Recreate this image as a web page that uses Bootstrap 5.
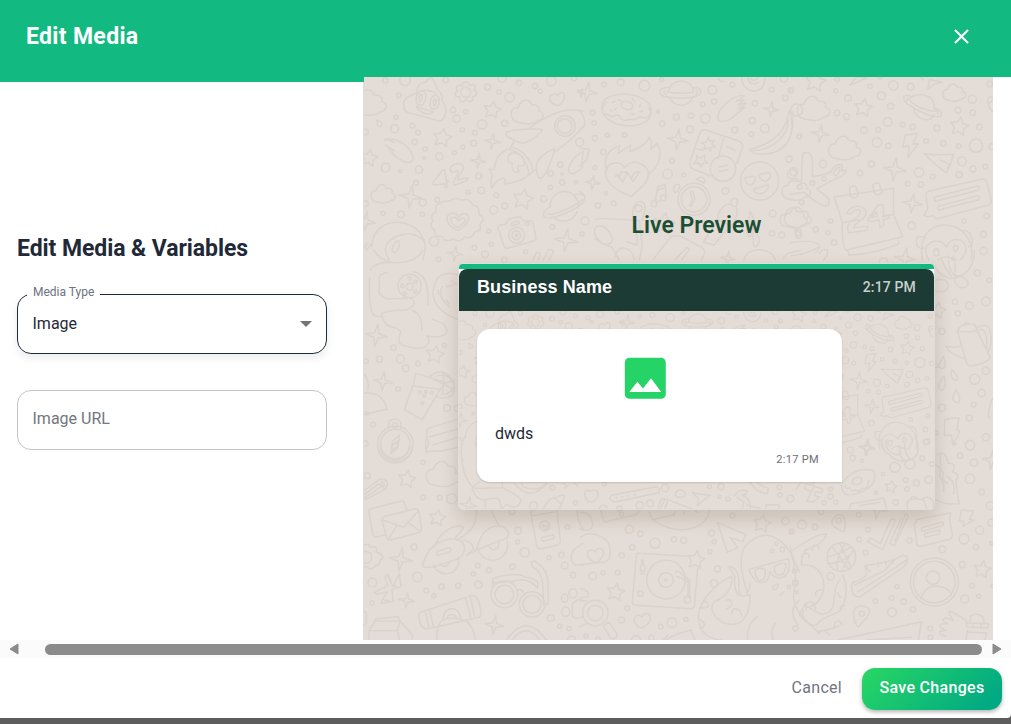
<!DOCTYPE html>
<html lang="en">
<head>
<meta charset="utf-8">
<meta name="viewport" content="width=device-width, initial-scale=1">
<title>Edit Media</title>
<link href="https://cdn.jsdelivr.net/npm/bootstrap@5.3.0/dist/css/bootstrap.min.css" rel="stylesheet">
<style>
body{font-family:Roboto,"Liberation Sans",sans-serif;background:#5d5d5d;color:#1f2937;height:724px;overflow:hidden}
.dialog{height:718px;background:#fff;border-radius:0 0 4px 0;overflow:hidden}
.dialog-head{height:77px;background:#12b981;padding:0 37px 4px 26px;color:#fff}
.dialog-head h1{font-size:23px;font-weight:700;line-height:28px;letter-spacing:.33px}
.panes{height:563px}
.form-pane{width:364px;border-top:5px solid #12b981;padding:0 37px 37px 17px}
.form-pane:after{content:"";position:absolute;right:0;top:0;bottom:0;width:1px;background:#dcdcdc}
.form-pane h2{font-size:23px;font-weight:700;line-height:28px;letter-spacing:-.07px;margin-bottom:31px;white-space:nowrap}
.field{height:60px;border:1px solid #c3c5c8;border-radius:14px;padding:0 14.5px;font-size:16px}
.field.active{border-color:#1f2937;box-shadow:0 4px 9px rgba(0,0,0,.08);margin-bottom:36px}
.float-label{left:9px;top:-12px;padding:0 6px;background:#fff;font-size:12px;line-height:18px;color:#6b7280}
.hint{color:#717780;padding-bottom:3px}
.wall-pane{width:629px;background:#e4dcd6}
.wall{left:0;top:0;fill:none;stroke:#dad2cb;stroke-width:4.4;stroke-linecap:round;stroke-linejoin:round}
.live-title{font-size:23px;font-weight:600;line-height:28px;color:#1c4e34;margin:135px 0 23px 36px}
.phone{width:477px;height:247px;border:1px solid #dcdddd;border-radius:5px;background:#e4dcd6;box-shadow:0 8px 18px rgba(75,60,35,.18);margin-left:36px}
.phone-in{border-radius:4px;overflow:hidden;height:245px}
.phone-line{height:5px;background:#12b981}
.phone-head-wrap{background:#fff}
.phone-head{height:42px;background:#1d3b35;color:#fff;border-radius:8px 8px 0 0;padding:0 18px 6px}
.biz{font:700 18px/22px "Liberation Sans",sans-serif;letter-spacing:.08px}
.clock{font-size:14px;font-weight:500;color:#c7d0ce;letter-spacing:.15px}
.bubble{width:365px;height:153px;margin:18px;background:#fff;border-radius:13px 13px 0 13px;padding:21.5px 23px 0 18px;box-shadow:0 1px 2px rgba(0,0,0,.15)}
.bubble svg{display:block;margin:0 auto;transform:translateX(-12px)}
.msg{font-size:16px;line-height:24px;margin-top:17px}
.stamp{font-size:11px;line-height:16px;margin-top:6px;color:#6b6f74;letter-spacing:.33px}
.scroller{height:18px;background:#fbfbfb;padding:0 9px}
.thumb{height:11px;border-radius:6px;background:#8b8b8b;margin:0 10px 0 26px}
.actions{height:60px;padding:2px 9px 0 0}
.cancel{font-size:16px;color:#717583;margin:0 20px 2px 0;line-height:20px;letter-spacing:.28px}
.save{width:140px;height:42px;border:0;border-radius:13px;color:#fff;font-size:16px;font-weight:500;letter-spacing:.3px;background:linear-gradient(135deg,#25d366 8%,#00a884 92%);box-shadow:0 2px 4px rgba(0,0,0,.3);padding:0 0 2px;white-space:nowrap}
</style>
</head>
<body>
<main class="dialog d-flex flex-column">
  <header class="dialog-head d-flex align-items-center justify-content-between flex-shrink-0">
    <h1 class="m-0">Edit Media</h1>
    <svg width="25" height="25" viewBox="0 0 24 24" fill="#fff" aria-label="Close"><path d="M19 6.41 17.59 5 12 10.59 6.41 5 5 6.41 10.59 12 5 17.59 6.41 19 12 13.41 17.59 19 19 17.59 13.41 12z"/></svg>
  </header>
  <section class="panes d-flex flex-shrink-0">
    <div class="form-pane position-relative d-flex flex-column justify-content-center flex-shrink-0">
      <h2>Edit Media &amp; Variables</h2>
      <div class="field active position-relative d-flex align-items-center justify-content-between">
        <span class="float-label position-absolute">Media Type</span>
        <span>Image</span>
        <svg width="12" height="6" viewBox="0 0 12 6"><path d="M0 0h12L6 6z" fill="#757575"/></svg>
      </div>
      <div class="field d-flex align-items-center hint"><span>Image URL</span></div>
    </div>
    <div class="wall-pane position-relative overflow-hidden flex-shrink-0">
      <svg class="wall position-absolute" width="629" height="563"><g id="doodles"></g><g id="doodlesLow"></g></svg>
      <div class="position-relative d-flex flex-column align-items-center">
        <h2 class="live-title">Live Preview</h2>
      </div>
      <div class="position-relative d-flex justify-content-center">
        <div class="phone">
          <div class="phone-in d-flex flex-column">
            <div class="phone-line"></div>
            <div class="phone-head-wrap"><div class="phone-head d-flex align-items-center justify-content-between"><span class="biz">Business Name</span><span class="clock">2:17 PM</span></div></div>
            <div class="position-relative flex-grow-1 overflow-hidden">
              <svg class="wall position-absolute" width="475" height="199"><use href="#doodles" transform="scale(.753)"/><g id="doodlesInner"></g></svg>
              <div class="bubble position-relative">
                <svg width="54.6" height="54.6" viewBox="0 0 24 24"><rect x="3" y="3" width="18" height="18" rx="2" fill="#25d366"/><path d="M8.5 13.5l2.5 3.01L14.5 12l4.5 6H5z" fill="#fff"/></svg>
                <div class="msg">dwds</div>
                <div class="stamp text-end">2:17 PM</div>
              </div>
            </div>
          </div>
        </div>
      </div>
    </div>
  </section>
  <div class="scroller d-flex align-items-center flex-shrink-0">
    <svg width="10" height="12" viewBox="0 0 10 12"><path d="M9 1v10L1 6z" fill="#8b8b8b" stroke="#8b8b8b" stroke-linejoin="round"/></svg>
    <div class="thumb flex-grow-1"></div>
    <svg width="10" height="12" viewBox="0 0 10 12"><path d="M1 1v10l8-5z" fill="#8b8b8b" stroke="#8b8b8b" stroke-linejoin="round"/></svg>
  </div>
  <footer class="actions d-flex align-items-center justify-content-end flex-shrink-0">
    <span class="cancel">Cancel</span>
    <button class="save" type="button">Save Changes</button>
  </footer>
</main>
<script src="https://cdn.jsdelivr.net/npm/bootstrap@5.3.0/dist/js/bootstrap.bundle.min.js"></script>
<script>
// Wallpaper tiles: x/y is the tile's origin in wall pixels; artwork is drawn at three units per pixel.
// dots: x,y,r   stars/sparks/clouds: x,y,radius
const upper=[
{x:-1,y:-7,
 dots:'67,31,8 126,31,16 248,30,8 374,51,9 417,25,12 468,39,8 516,48,8 532,64,6 565,33,14 408,66,7 440,82,14 107,76,7 270,120,8 308,125,6 281,146,11 99,142,6 95,176,12 148,167,7 165,188,7 357,163,14 425,160,9 298,179,6 336,188,7 155,216,8 186,237,7 184,264,4 332,220,9 300,231,6 229,259,11 274,248,6 68,293,13 112,304,5 168,299,11 159,338,7 347,318,9 355,361,10 316,367,6 400,376,7 179,398,10 223,389,7 114,433,10 60,430,6 178,433,6 8,401,8 392,420,12 425,408,9 377,484,6 385,523,6 334,533,7 213,514,14 488,545,6 366,553,10 227,568,7 592,284,8 563,310,8 597,312,4 598,337,8 639,337,5 562,352,6 542,386,9 568,471,7 8,186,8 650,217,12 424,570,8 633,25,8',
 stars:'388,120,27 238,204,29 480,388,32 18,264,27',
 sparks:'388,214,24 346,273,22 143,380,35 609,511,35 276,551,23 8,455,30 655,69,12',
 clouds:'492,128,47 60,373,36 18,100,50',
 paths:['M125 112c-12-20 8-35 38-43 -5-20 10-33 25-33 12-12 16-14 18-14 8 15 16 21 15 35 15 11 20 25 15 34 20 20 13 62-9 62l-90-25c-14-5-18-12-12-16zM160 110c12 22 48 28 50 15z M163 72c12-20 55-9 58 4',
 'M160 84a14 19 15 1 0 28 0a14 19 15 1 0-28 0 M202 97a13 18 15 1 0 26 0a13 18 15 1 0-26 0 M169 84a4 9 10 1 0 8 0a4 9 10 1 0-8 0 M211 97a4 9 10 1 0 8 0a4 9 10 1 0-8 0',
 'M299 39q9-6 18 0l3 8 9-4q9 3 8 12l-4 6 8 5q2 9-5 13l-8 1 2 9q-7 8-15 5l-6-6-7 7q-11 1-12-6v-9l-9 1q-7-7-3-15l7-4-6-7q2-10 11-10l8 3zM293 67a15 15 0 1 0 30 0a15 15 0 1 0-30 0',
 'M560 83c4-13 18-15 24-6 9-16 24-10 20 5-2 10-10 20-18 25-14-3-28-10-26-24z',
 'M65 212c15-18 85 10 85 58-14 20-50-2-75-38M67 225l28 18M75 232l18 10M65 206l30 12M77 240',
 'M240 299l-33 42 6 4 30-3 4 10 6-1-4-12 8-4-7-5-6-31zM264 305c-14-20 30-34 37-16 4 14-18 27-17 40 12 0 24-9 32-4 0 8-20 13-42 20-9-4 8-26 12-40-7-7-12 7-22 0z',
 'M428 189c10-12 105-14 110-10-2 10-42 42-60 40-15-2-54-20-50-30zM500 174c60-46 115-62 160-50M577 245c30-22 60-45 83-75M575 236c-30 12-62 36-54 64 2 16 4 27 14 24 15-8 34-60 40-88zM455 213l-15 24 M428 238c40 0 66 35 70 76l23-17M448 232c35 10 58 40 62 72M430 240c-20 12-32 20-36 58-8 0-14 2-16-2 5 13 12 17 10 22-6 10-4 24-2 36 12-20 20-27 37-30 8 10 4 14 0 18 32-4 58-10 72-26 M440 252c-12 17-2 28 8 28-4 22 6 30 20 25-4-8-8-18 4-18 14 3 16-10 8-24-10-10-25-20-40-11z',
 'M575 168a31 31 0 1 0 62 0a31 31 0 1 0-62 0M583 168a22 22 0 1 0 44 0a22 22 0 1 0-44 0',
 'M655 247c-18 8-42 40-38 58 10 14 30 2 43-18',
 'M233 400c14-15 22 0 32-10 20-12 24 2 35 0 20-6 23 8 31 16 18 2 18 15 16 26 19 10 15 21 3 30 9 16-4 23-16 24-2 15-15 20-30 15-8 14-22 14-34 5-14 10-29 4-33-6-20 0-24-8-22-20-16-8-11-20-5-26-9-14-2-26 9-28-3-16 1-26 14-26z',
 'M252 448c0-22 28-24 34-6 8-14 31-16 31 3 0 14-18 30-32 36-22-9-32-18-33-33zM263 448c0-10 18-8 24 5 6-13 20-10 20-3 0 8-13 17-22 23-14-7-20-14-22-25z',
 'M405 475q-1-7 6-9l18-4 7-15 35-7 14 14 18-2q6 1 7 7l9 44q0 8-8 10l-76 21q-9 2-12-5zM437 496a24 24 0 1 0 48 0a24 24 0 1 0-48 0M447 496a13 13 0 1 0 26 0a13 13 0 1 0-26 0M457 496a4 4 0 1 0 8 0a4 4 0 1 0-8 0M444 460l22-7q6 4 0 9l-20 5q-5-2-2-7zM488 462a5 5 0 1 0 10 0a5 5 0 1 0-10 0',
 'M562 410a42 42 0 1 1 83 5M642 425a42 42 0 0 1-70 15M562 410c-25 13-26 30-12 34 25 4 87-25 110-45M554 432c24 4 80-23 106-44M660 375c-8-4-16-4-24-1',
 'M27 530c0-100 150-95 160 0 0 12-3 25-8 40M68 535c4-40 90-65 118-17M67 535q0 18 12 35M87 540q6-29 20-28 7 9-7 34-12 4-13-6zM12 520l-8 15M10 540l14-17',
 'M510 570l10-22q8-2 12 4l-7 18M540 570l17-31q12-2 14 6l-12 25','M42 150q14 2 15 15-8 10-14 2z']},
{x:216,y:-7,
 dots:'72,43,7 122,37,10 193,47,16 245,29,6 397,60,13 457,44,7 368,103,7 402,94,8 289,141,9 333,137,8 376,145,14 247,161,8 234,125,4 38,128,7 42,159,7 45,205,8 82,196,6 134,195,7 70,246,8 45,293,6 525,100,8 575,59,7 616,84,8 517,152,9 554,175,13 514,192,7 464,180,9 330,178,10 276,272,7 263,312,14 311,315,6 78,370,5 54,406,8 101,400,7 436,363,10 627,267,9 636,312,14 578,431,10 605,495,9 576,490,8 632,61,8 657,200,6 654,487,10 6,492,6 612,25,11 15,453,12 650,120,18',
 stars:'252,462,34',
 sparks:'22,66,30 293,209,32 574,118,23 38,338,22 444,565,22',
 clouds:'640,445,40 648,360,42',
 paths:['M66 110c0-55 148-50 148 15 0 62-152 55-148-15zM80 95c-15 15-17 34-4 37 8 0 11 8 22 8 10-6 13-7 18-4 10 12 12 18 26 14 8-8 12 5 25-3 12-12 18-4 25-3 19-2 24-14 15-30M124 103c2-17 36-8 34 8-4 15-38 6-34-8zM97 98l8-4M105 119l4-6M115 89l9 3M157 87l8 8M150 130l12 4M181 103l-2 9M180 125l10-3M91 119l3 4',
 'M267 66c0-43 70-45 73 0M268 83c16 31 56 30 70 0M266 52c-38 2-30 26-5 29 33 5 68 4 91-3 22-14 8-26-13-25M262 66c30 5 55 5 79 0M254 62q-6 8 4 10M350 61q7 7-2 11',
 'M413 140c2-27 52-70 80-62l-25 16 25-5-18 15 23-5-24 18 20-5-25 21c-25 26-58 28-56 7z',
 'M485 25c5 52 72 50 69 0M503 25q7 25 33 12M512 25q10 13 20 0M414 25q5 13 19 9',
 'M508 238c45-8 106-40 116-100l5-18 8 4-3 20c9 55-16 105-78 108-28 3-45-5-48-14zM515 242c65 0 110-47 110-92',
 'M330 275l30-87q5-12 18-8l98 33q14 6 12 18l-17 48M392 318l-53-21q-12-7-9-22M431 205l-17 61M351 238l16 2M440 230l25 10M385 202l5 11 13-2-8 11 12 8-14 2-1 12-9-10-12 5 5-13-11-7 13-3zM350 256l11 9 14-10-2 15 11 9-16 1-6 10-7-12-15 4 10-13zM391 296a38 38 0 1 0 76 0a38 38 0 1 0-76 0M415 291l26-5M418 304l26-5',
 'M81 300c-13-32 0-58 38-74l-5 25 38-26-3 20c26-10 54-26 58-44 10 12 9 24 5 37l19-17c12 20 19 64-28 92M76 312c0-36 44-44 58-19 28-35 72-5 72 20-4 32-38 51-52 66-35-13-73-32-78-67zM105 320l9-5 14 22 14-30 17 27 20-30-16 4-9 18-14-20-17 1-6 17-5-10z',
 'M482 333a57 57 0 1 0 114 0a57 57 0 1 0-114 0M496 332q-4-15 14-10 13-9 16 4-1 12-12 21-17-6-18-15zM538 320q0-13 15-8 13-12 19 2 0 12-16 21-14-5-18-15zM520 356q28-5 44-12c6 25-36 40-44 12z',
 'M294 388a48 48 0 1 0 96 0a48 48 0 1 0-96 0M304 388a38 38 0 1 0 76 0a38 38 0 1 0-76 0M330 367l8-3 7 26-11 19-5-3 8-17zM300 347q-6-8-17 0-4 11 2 20 11 0 15-20zM349 327q12-10 24 0 3 8-1 13z',
 'M241 391l-15 6 7-46 22-8 4 40M230 404a8 10 0 1 0-2 4M257 386a8 9 0 1 0-2 4M233 360l21-8',
 'M159 450c-9-65 38-68 36-35 0 10-7 22-8 35M166 415a10 10 0 1 0 20 0a10 10 0 1 0-20 0M48 448q10-6 130 4l9 75-9 43M43 485c0-35 52-13 54 25-11 30-49 3-54-25zM105 560c7-40 50-32 58 8M45 505q14 18 50 26l22 38M170 470l2 55-32-9',
 'M454 390q8-9 19 0l-3 17q-6 6-17-3zM450 402q-35 5-38 49l-42 66 33 8 33-43q20-10 27-30 13-20 5-42M410 447l34 18',
 'M220 568l52-67q14-8 35 0l59 32q11 8 7 18l-8 19M287 568l32-35q11 0 7 8l-20 28',
 'M492 570c5-40 83-42 94 0M610 565q5-18 50-23M510 425q15 30 21 32-10 3-17-5 0 55-5 50-15-15-7-30zM518 475q20 20 20 42-14 25-18 4zM600 25M0 125q18 20 13 42L0 180M0 365q30 15 0 40M0 235l28 3-8 30-20 20M10 244l-5 40']},
{x:427,y:-77,
 dots:'138,238,7 134,272,6 237,259,6 307,256,14 359,260,10 171,294,10 271,287,12 138,339,8 167,350,9 299,319,9 290,366,13 335,374,7 365,381,8 438,384,9 501,331,9 545,338,8 544,298,12 565,381,8 596,252,8 219,391,10 262,389,7 25,409,7 258,427,14 292,438,8 405,423,7 457,430,8 503,438,7 555,437,20 513,484,13 583,500,7 546,507,9 504,524,9 384,517,14 350,551,7 390,554,8 425,530,7 96,492,11 241,492,9 207,519,8 99,537,6 64,549,7 26,561,7 32,607,7 119,663,7 111,698,6 74,688,8 129,728,8 362,677,11 519,663,7 587,648,8 577,703,9 578,753,11 278,785,12 8,515,12 267,225,11 603,440,9 2,270,6',
 stars:'73,245,32 217,324,28 505,380,29',
 sparks:'88,401,27 311,508,35 364,610,30 342,775,32',
 clouds:'67,327,48 489,279,34 160,446,47 20,653,40',
 paths:['M176 256l22-26 30 4zM410 267l6-28 38 8q-18-1-44 20zM390 225q-2 12 7 14',
 'M358 295c18-20 75-16 72 32M368 323c0 35 56 50 60 20M360 290c-29-15-28 15-3 26 32 24 74 38 92 33 11-16-16-25-21-24M350 294c17 22 47 38 90 40M351 295q-8 5-4 12M434 330q9 5 5 13',
 'M343 406l36-6-13 32 16-1-31 41 4-34-19 2zM400 462q45 4 87 1-5 28-21 56-33-23-66-57zM448 480l28 13-7 12',
 'M36 460q25-10 28 20v50q30-3 56-14 10-27 33-22 4 12-2 20l14-4q3 15-30 25l-58 31 36 29q5 20-7 24-30-6-66-42l-40 6M0 543l32-1q-2-40 4-82M128 520q7-20 19-18-1 18-11 26-8 0-8-8z',
 'M129 591l179-26q-2 37 0 78l27 67-168 40q-14-3-13-82-10-35-25-77zM169 750l5 16q80-5 149-34v-9M154 668l53-9M275 650l33-7M175 565q10-12 20-4l7 24q-8 14-24 4zM245 555q12-10 20-4l8 26q-9 12-23 4z',
 'M168 641c6-28 56-30 57-2 0 23-34 26-38 45q30-7 44-4 3 9-12 12l-46 6q-12-30 25-45 15-18 7-22-12-9-26 12zM262 614l-32 46q3 9 34 0l4 22q14 0 9-23l18-5-2-9-16 2v-32zM256 635l-14 17 17-3z',
 'M411 574l165-37q8 0 11 8l14 57q-2 12-10 13l-150 41q-10 0-15-9-12 6-27-1 8-12 11-20l-5-36q-1-13 6-16zM431 591l129-33q8 3 3 12l-128 34q-8-5-4-13zM441 619l119-32q9 4 2 12l-118 31q-8-4-3-11z',
 'M395 780c-30-150 170-130 145 0M399 744q-27 7-22-31 10-6 28 1M514 692q26-5 30 35 1 15-12 12M414 780q-25-40 13-56 26-5 40 18 10-30 42-22 34 25-2 60M428 757a8 11 0 1 0 16 0a8 11 0 1 0-16 0M487 745a7 9 0 1 0 14 0a7 9 0 1 0-14 0M432 750q5-5 8 0M442 780q20-18 54 0M470 768l15 12',
 'M18 690q18 14 12 23-10 5-16-4zM0 728q80-14 87 14l-12 16M0 767q50-5 87-27M85 762q8-19 24-12 4 15-12 30M590 310q-2-24 15-18M606 300l-14 10q4 20 14 25M0 340q12 30 0 60']}];
const lower=[
{x:-1,y:173,
 dots:'91,293,8 112,327,12 128,355,10 165,341,7 50,328,9 9,333,7 244,286,6 105,417,7 252,474,10 283,475,9 30,524,7 7,580,8 12,490,5',
 stars:'216,314,28',
 sparks:'40,256,34 60,394,29',
 clouds:'',
 paths:['M32 0q25 40 72 38 60-2 75-38M20 60q20-25 60-22M20 85q-4 50 5 100 10 20 35 12M150 65q50 4 45 100M75 68q-35 0-25 40-10 25 20 38 65 0 72-3 28 20-12 37-50 0-74 10 4 40 42 43l15 10c-10 40-10 40 35 50 50 10 60-25 43-35 50 8 75-8 52-35-12-8-25-12-35-15M145 180q34 10 31 60',
 'M105 108a35 35 0 1 0 70 0a35 35 0 1 0-70 0M130 110a10 10 0 1 0 20 0a10 10 0 1 0-20 0M113 108a5 5 0 1 0 10 0a5 5 0 1 0-10 0M135 86a5 5 0 1 0 10 0a5 5 0 1 0-10 0M152 95a5 5 0 1 0 10 0a5 5 0 1 0-10 0M152 125a5 5 0 1 0 10 0a5 5 0 1 0-10 0M120 131a5 5 0 1 0 10 0a5 5 0 1 0-10 0',
 'M216 100q12-40 70-26M218 95q-32 75 66 113M238 110q-17 30 20 60M265 92l16 10M250 110l20-4M250 150l8 12M225 120l3 14',
 'M157 370l88 26-68 113-53-30 30-85zM149 408l82 10M199 382c45-50 100 30 64 57q-25 11-46-1M220 378q40-10 54 25-5 32-40 30M242 402l31-12M242 402l29 16M242 402l-2-30M242 402l-4 30M242 402l-28-12',
 'M185 425a4 4 0 1 0 8 0a4 4 0 1 0-8 0M202 428a4 4 0 1 0 8 0a4 4 0 1 0-8 0M180 437a4 4 0 1 0 8 0a4 4 0 1 0-8 0M174 460a4 4 0 1 0 8 0a4 4 0 1 0-8 0M167 427a4 4 0 1 0 8 0a4 4 0 1 0-8 0M0 430q60-8 72 48L0 494M0 370q20 15 14 50',
 'M44 582a53 53 0 1 0 106 0a53 53 0 1 0-106 0M53 582a44 44 0 1 0 88 0a44 44 0 1 0-88 0M77 536q-4-30 19-29 22 2 17 29M88 526a8 8 0 1 0 16 0a8 8 0 1 0-16 0M110 555l-6 32-20 18 5-32zM97 579l8 5',
 'M188 600q15-20 4-35l-1-20q1-10 10-12l84-25M200 560l84-22M209 585l75-22']},
{x:456,y:173,
 dots:'472,69,9 508,91,7 498,154,13 448,167,11 405,155,8 413,190,8 366,244,9 348,347,6 498,362,11 464,388,15 485,429,11 461,464,7 448,504,9 366,473,10 348,548,6 498,562,11 450,586,14',
 stars:'353,182,25',sparks:'',clouds:'',
 paths:['M343 50q20 35 60 35 60-15 60-85M365 30q15 35 30 48M385 30q2 40 25 48M400 18q8 30 5 48M345 92q35-12 40 15-5 25-40 15M404 85q10-20 40 10 2 20-20 18-20-5-20-28',
 'M412 244q10-30 54-20l5 18 39 78q-2 20-58 28-10 0-12-10zM412 244q30 4 59-2M432 226l5-10 11 6M425 287q-15 8-47 2 10 25 58 38M470 235q24-20 38 0 12 35-2 68M478 240q24-10 22 52',
 'M370 320q12 28-2 36-12 0-10-15zM395 357q25 28 16 34-15 0-17-15zM372 378q10 30-4 42-14 0-12-18zM408 417q18 34 7 41-18 0-17-16zM373 512q8-8 44-8l-7 36 9 3-19 44q-6-20-5-32l-22 2zM518 445q-15 30-12 60']},
{x:-1,y:363,
 dots:'13,107,9 180,67,6 180,172,7 230,173,7 266,176,15 28,428,13 163,411,14 153,321,9 27,489,7 190,452,7 212,467,6 235,440,8 286,437,8 346,434,11 331,402,6 344,377,7 378,391,8 448,380,8 464,306,6 465,272,10 485,337,14 447,215,8 613,261,7 558,353,6 595,345,8 605,377,10 630,405,8 563,534,10 590,559,6 618,566,6 626,600,12',
 stars:'132,118,27 223,234,26',
 sparks:'113,358,35 131,481,24 394,555,29',
 clouds:'240,104,50',
 paths:['M44 17a52 52 0 1 0 104 0M53 17a43 43 0 1 0 86 0M108 0l-4 23-20 18 3-24zM188 0v36q20-5 40-2l60-12M0 155l48-36q18-6 25 7 2 14-8 22L8 179M0 166l45-33q10-2 12 5L0 177M53 125q18 6 6 18',
 'M29 205l89-22q7 1 7 7l5 19M29 205q-14 2-11 15l12 65q4 7 11 6l24-6M68 228l90-22q8 0 10 8l8 53q0 9-9 11l-83 22q-10 2-12-7L57 244q0-13 11-16zM59 240l63 22 44-50M76 298l26-42M171 274l-34-25',
 'M179 375q20-77 95-79 30 5 31 31-5 30-36 34-62 26-85 21-8-2-5-7zM222 334l36-11q9 2 4 12l-36 11q-9-2-4-12zM212 374a37 37 0 0 0 74-23M231 370q15 20 31-5M215 319q20-55 75-62 15 5 10 10l-27 31M303 301q25 5 28 25l-20 20 33-17M340 330q20-85 82-70 25 20 8 35-50 18-90 35zM345 328a44 44 0 0 0 87-25M378 318a15 15 0 1 0 29-8M340 210q5 60-60 90M385 212l22 45',
 'M503 220q0-8 8-10l62-12q8 3 9 13l10 92q0 9-7 11l-55 14q-8-3-9-11zM502 222l9 5 64-12M530 258a15 15 0 1 0 30 0a15 15 0 1 0-30 0M538 259q2-10 8 2 9-9 9 2l-9 8zM538 292l32-7q8 5 2 11l-32 8q-8-5-2-12z',
 'M65 411l10-9 15 39 19-40 5 38-28 10 5 35-38 6 20-35-32 8-7-6 41-20zM75 408l9 22M92 438l10 0M66 481l12 2M0 318q18-12 20 2l18 1q6 7 0 15 21 6 22 17l-10 9q2 15-12 14-9 15-22 9-7-10-16 2M0 335q30-5 25 24-9 14-25 10',
 'M389 416q70-22 96-5 50 7 38 33-29-35-74-20l-57 5zM384 463a40 40 0 1 0 80 0a40 40 0 1 0-80 0M396 463a28 28 0 1 0 56 0a28 28 0 1 0-56 0M469 493a38 38 0 1 0 76 0a38 38 0 1 0-76 0M480 493a27 27 0 1 0 54 0a27 27 0 1 0-54 0M460 450q20-5 25 15M389 416l-1 32M505 370q5-12 15-3 35 23 35 58l1 66-14 5-4-74q-5-28-30-42z',
 'M170 517l155-50q16-2 22 18 12 40 2 47L192 567q-15 0-21-20-5-20-1-30zM186 512q8 30 11 50M199 508q8 30 12 54M308 473l15 60M321 468l14 60M240 540q2-34 26-34 22 0 27 27M252 535q8-20 27-5M222 600q-5-65 40-65 70-5 74 65',
 'M38 536l68-6 5 13-75 0zM36 543L18 572l85 0 8-29 37 41v16M18 572v28M103 572l7 28M430 600q60-85 120 0M448 600q40-55 82 0M595 475a10 12 0 1 0 20 0a10 12 0 1 0-20 0M618 460a12 14 0 1 0 24 0a12 14 0 1 0-24 0M596 515a12 14 0 1 0 24 0a12 14 0 1 0-24 0M628 492q20-20 32-10M628 492v37q16 12 32 0M660 310q-55 30-26 64h26M643 210q0 40 20 60M0 515q8-3 10 5v30l-10 5']},
{x:216,y:403,
 dots:'118,86,7 124,102,6 148,148,12 181,161,8 157,202,8 225,190,15 282,178,8 311,181,9 125,226,8 69,278,6 38,288,11 113,278,7 181,341,8 142,385,7 124,420,9 242,440,7 276,428,14 318,418,6 214,474,8 168,480,13 18,468,6 395,159,9 402,185,6 390,215,6 412,267,9 402,310,11 457,107,7 616,123,11 635,155,7 589,191,5 607,208,7 577,213,5 644,272,6 646,309,8 627,321,5 650,337,5 54,478,7',
 stars:'546,131,28 348,240,28 107,337,27',sparks:'',clouds:'',
 paths:['M63 88q5 40 16 37l86-21q12-3 12-14M0 97q35 0 38 35-3 28-38 15M207 95c10 50 134 84 177 15l5-20M215 120l65-16M285 95l-3 10M311 95v8M344 92l10 5',
 'M0 172q26-18 56-5 44 16 32 65-5 17-28 15L0 254M22 223q3-20 24-8 6-17 23-5 8 18-19 38-25-6-28-25z',
 'M176 220l152 9M353 267l-10 112q-3 9-13 7l-163-10q-11-2-10-13l12-134q0-10 7-9M200 299a58 58 0 1 0 116 0a58 58 0 1 0-116 0M236 300a22 22 0 1 0 44 0a22 22 0 1 0-44 0M254 300a3 3 0 1 0 6 0a3 3 0 1 0-6 0M185 240l5 0-1 14 7 5-2 15-10-1-4-8 5-12zM184 275v7l8-1M286 278q10-9 18 3l25 19v55M290 289l34 14v49M312 359a10 10 0 1 0 20 0a10 10 0 1 0-20 0',
 'M413 128l85 36-10 21-37-12 22 30-31 14zM504 345q-35-100-10-145 70-75 135 13l30 64M507 268l118-32q10 40-15 55-28 8-40-17-4 38-34 33-16-3-29-39zM525 270q14-9 30-2 5 25-10 33-20 2-20-31zM584 258q20-13 34-6-2 40-27 32-11-10-7-26zM508 310q5 19-10 27M577 321q11-8 18-10-1 19-15 18zM600 345q15-12 10-8',
 'M475 346q-15-20-10-55-15-28-20-32 30 0 32 50-4 35 10 40l24-5c-2 75-30 100-78 85-25-12-50-38-30-65q55-20 52-75c-50 20-100 80-100 120 0 50 35 70 70 71M355 417q14 3 18 16-2 14-15 12M370 365q15-2 14 13-10 10-20 4M439 360q14-5 16 14-6 9-16 14M455 400q2-20 22-10 10 14 8 18M510 345v10M533 408q-35 25-30 72M585 430q-15 26-6 50M659 360q-38 30-6 75',
 'M163 425q0-28 24-15 8-17 23-4 7 22-24 38-18-5-23-19zM8 399a38 38 0 1 0 76 0a38 38 0 1 0-76 0M23 399a23 23 0 1 0 46 0a23 23 0 1 0-46 0M70 438l12-9q8-2 10 5l17 25q5 12-4 16-8 5-15-4zM0 362l20 0M0 326q30 5 23 24l-23 3M0 440l20-10M258 480q25-18 75-30l12 30M250 480l15-15']},
{x:426,y:363,
 dots:'540,15,14 552,68,11 510,47,8 540,116,14 575,156,8 93,215,8 36,254,13 75,261,8 5,274,5 206,224,7 234,269,7 207,299,7 227,338,7 358,301,8 457,328,10 522,297,15 569,271,12 558,321,8 517,374,9 604,310,5 546,437,7 566,469,6 524,477,12 122,409,11 321,440,6 257,483,7 305,474,7 341,485,8 306,517,13 369,508,8 13,393,6 16,429,8 20,457,4 604,248,10 601,197,12 421,565,7 421,592,7 16,565,8 608,438,5',
 stars:'577,389,27',sparks:'262,207,32 605,60,28',clouds:'',
 paths:['M440 45q25-20 35 25 28 0 13 25 25 10 9 26l10 70q-42 5-70-13M437 75q20 5 12 35 18 25 10 45M452 45q-3 45 8 52-6 25 13 34M490 0q2 22 10 10M470 108q30 18 20 55M515 210l36 3-12 25 12 2-33 20 4-16-14-2z',
 'M127 240q10-20 30-15 15 18 5 50-25-7-37-25zM138 241a8 8 0 1 0 16 0a8 8 0 1 0-16 0M231 305l12-11 28 16 30-68q8-12 14 0l-37 87zM315 303l31-80q9-1 7 8l-39 86-15-7 35-76',
 'M377 239l105-21-3 17 8 51q-2 12-12 13l-83 20q-10 0-12-9l-7-57q0-7 7-7zM397 263l61-17q4 5 0 11l-60 17q-7-5-1-11zM405 280l43-10q5 5-1 12l-41 10q-6-5-1-12z',
 'M111 351a43 43 0 1 0 86 0a43 43 0 1 0-86 0M111 351q40-8 72-31M120 371q50-5 70-39M126 319l51 71M148 308l36 75M154 394l35-64M142 392q-6-40 25-83',
 'M185 440l3-13q35-8 42-25l-5-24 15-4q58-5 97-28 14-2 16 12-5 24-24 31l-120 82q-24 0-24-31zM203 456l85-54q40-28 64-43M195 435l90-44 30-34M265 367v12M286 364l3 11M305 360l5 9M227 379q5 10 14 16',
 'M361 426a72 72 0 1 0 144 0a72 72 0 1 0-144 0M371 426a62 62 0 1 0 124 0a62 62 0 1 0-124 0M409 413a20 20 0 1 0 40 0a20 20 0 1 0-40 0M392 475q18-45 58-35 30 4 34 26',
 'M0 320q18 60 17 118-16 35 5 71 10 22 60 65 23 0 64-16M8 330l60-37q25-12 42-10-15 35-65 48-11 22-11 45c60-12 85 60 55 101-20 30-50 30-43 13l-18 35q44 50 60 20 10-10 60-30 35-50 10-110 4-2 1 6M150 420q-15 10-18 60-5 50-45 40-24-14-37-22M36 359q-2-20 14-19 10 4 8 15M67 332q-2-20 15-16 6 5 5 11M78 467q-6-18 18-18M50 510q-11-18 10-25 16 4 17 22M153 510q-7-17 12-14M135 562q-7-18 13-19l8 10M85 580q15-20 33 5M154 470q-9 2-10-11M42 530q-9-1-1-17',
 'M190 527q0-30 25-30 38 4 14 38-16 15-24 26-12-10-15-34zM207 521a8 8 0 1 0 16 0a8 8 0 1 0-16 0M145 600l250-55-10 55M230 600l135-8',
 'M478 513q40 18 51 31l1 16 60 4q8-2 5-13l-62-2M475 516l14 26q-20-12-30-4 0 8 15 14-25-3-25 5 2 7 20 14-22 0-20 8 5 8 20 9M540 530q17-14 38 0l5 20M542 526l-2 24M530 575l60 4-5 21M533 570l-5 30M549 552l-1 12M572 554v12']}];
const inner=[
{x:-96,y:129,dots:'568,143,7 511,197,12 637,188,6',stars:'',sparks:'317,195,25',clouds:'',
 paths:['M300 0q-12 40 0 60M295 45q5 75 40 100M350 125q-20 15-23 20 10 35 40 35v26M418 125l0 18-80 2M418 143q62 30 55 40-10 30-42 10l-13 12M370 178q38-8 40 3l5 25M455 130q45 60 98 0M475 130l5 10q20 10 50 5l20-14M600 130q12 2 5 15l10-9M635 130q5 5 10 9M540 206l20-27 40-15 5 5-15 37M575 174l18 16']},
{x:121,y:169,dots:'255,24,11 210,70,10 179,76,11 118,86,8 73,12,6 388,20,6 423,20,9 419,50,5 444,57,6 598,22,7 600,45,7 631,56,10',stars:'',sparks:'',clouds:'',
 paths:['M14 43q0-18 17-9 17-8 24 5-3 20-19 29-20-6-22-25zM94 46l135-26q15 6 7 18L105 66q-22-5-11-20zM108 53h2M126 50h2M144 48h2M163 44h2M290 34q16-12 27 7-1 14-26 10-10-9-1-17zM337 38l52 8-37 30 4-20zM235 84q7-35 20-28l80 30M242 84l12-24M255 84l8-20M463 48q14-25 40-14-7 14-18 10 30 15 26 43M470 52l22 14-5 20M510 6q22 35 52 35l3-17q-25-5-33-18M558 86l0-12 40 0-3 12M57 86q10-18 25-4M500 75l40 10']},
{x:331,y:129,dots:'188,54,8 216,62,5 279,102,5 258,158,5 347,120,7 351,147,7 379,129,9 416,119,11 425,72,7 397,55,7 411,5,8 315,82,15 360,72,15 122,169,8 137,187,6 102,188,6 122,147,6 317,187,8',stars:'303,141,19',sparks:'232,23,23',clouds:'',
 paths:['M275 0q-5 30 25 45 30 32 70 10 22-15 10-55M290 0q-10 35 35 45M330 20q-5 35 20 45M345 12q-2 30 15 45M155 135q35-60 95-43 20 50-60 72-36 5-35-29zM187 123q8-17 29-8 1 17-17 19-14-1-12-11zM165 135q2 14 14 8 5 15 17 6 10 9 20-4 19 5 20-25M18 148l20-30 35 8-3 10-22-5-5 15 20 8M50 184l22-46 27 10-4 10-18-3-4 12 15 4-18 15zM179 206l3-15 100-16 7 31M210 197l60-10M352 206v-22q20-12 49-3l9 25M395 180q20-20 35 6v20M362 176l4-6 15 3']}];

const nums=s=>s?s.split(' ').map(p=>p.split(',').map(Number)):[];
const f=n=>n.toFixed(1);
function star([x,y,r]){
  let d='';
  for(let i=0;i<10;i++){const a=(i*36-80)*Math.PI/180,k=i%2?r*.5:r;d+=(i?'L':'M')+f(x+k*Math.cos(a))+' '+f(y+k*Math.sin(a));}
  return d+'Z';
}
function spark([x,y,r]){
  let d='';
  for(let i=0;i<8;i++){const a=(i*45-82)*Math.PI/180,k=i%2?r*.28:r;d+=(i?'L':'M')+f(x+k*Math.cos(a))+' '+f(y+k*Math.sin(a));}
  return d+'Z';
}
function cloud([x,y,r]){
  const p=(a,b)=>f(x+a*r)+' '+f(y+b*r);
  return `M${p(-.8,.55)}C${p(-1.2,.1)} ${p(-.95,-.35)} ${p(-.6,-.3)}C${p(-.35,-.95)} ${p(.15,-.9)} ${p(.3,-.5)}C${p(.85,-.55)} ${p(.8,-.2)} ${p(.75,-.1)}C${p(1.3,.05)} ${p(.95,.5)} ${p(.65,.5)}C${p(.3,.85)} ${p(-.4,.7)} ${p(-.8,.55)}Z`;
}
function draw(id,tiles,scale){
  document.getElementById(id).innerHTML=tiles.map(t=>`<g transform="translate(${t.x} ${t.y}) scale(${scale})">`
    +nums(t.dots).map(c=>`<circle cx="${c[0]}" cy="${c[1]}" r="${c[2]}"/>`).join('')
    +[...nums(t.stars).map(star),...nums(t.sparks).map(spark),...nums(t.clouds).map(cloud),...t.paths].map(d=>`<path d="${d}"/>`).join('')+'</g>').join('');
}
draw('doodles',upper,1/3);
draw('doodlesLow',lower,1/3);
draw('doodlesInner',inner,1/3);
</script>
</body>
</html>
